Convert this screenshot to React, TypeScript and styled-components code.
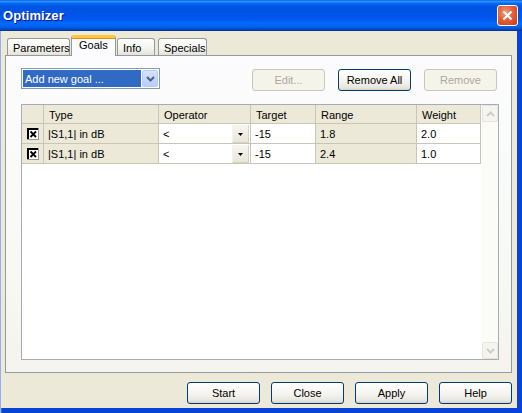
import React from "react";
import styled, { createGlobalStyle, css } from "styled-components";

const GlobalStyle = createGlobalStyle`
  html, body {
    margin: 0;
    padding: 0;
    background: #ffffff;
  }

  body {
    font-family: "Liberation Sans", Arial, sans-serif;
    font-size: 11px;
    color: #000;
  }

  * {
    box-sizing: border-box;
  }
`;

const Window = styled.div`
  width: 522px;
  height: 413px;
  display: flex;
  flex-direction: column;
  overflow: hidden;
  background: linear-gradient(to right, #c7d5f2 0px, #0842d6 2px, #0842d6 100%);
`;

const TitleBar = styled.div`
  height: 31px;
  flex: none;
  display: flex;
  align-items: center;
  justify-content: space-between;
  padding: 0 4px 1px 3px;
  background: linear-gradient(
    to bottom,
    #0058ee 0%,
    #3593ff 4%,
    #288eff 6%,
    #127dff 8%,
    #036ffc 10%,
    #0262ee 14%,
    #0057e5 20%,
    #0054e3 24%,
    #0055eb 56%,
    #005bf5 66%,
    #026afe 76%,
    #0062ef 86%,
    #0052d6 92%,
    #0040ab 97%,
    #003092 100%
  );

  h1 {
    margin: 0;
    color: #ffffff;
    font-family: "Liberation Sans", Arial, sans-serif;
    font-size: 13px;
    font-weight: 700;
    text-shadow: 1px 1px #0a1883;
    letter-spacing: 0.1px;
  }
`;

const CloseButton = styled.div`
  width: 21px;
  height: 21px;
  border: 1px solid #ffffff;
  border-radius: 3px;
  display: flex;
  align-items: center;
  justify-content: center;
  background: radial-gradient(circle at 40% 35%, #f0a080 0%, #e2603a 45%, #c43c17 100%);
`;

const Body = styled.div`
  flex: 1;
  margin: 0 5px 5px 1px;
  background: #ece9d8;
  display: flex;
  flex-direction: column;
`;

const TabStrip = styled.div`
  height: 20px;
  margin-top: 4px;
  padding-left: 6px;
  display: flex;
  align-items: flex-end;
  gap: 1px;
`;

const Tab = styled.div<{ $active?: boolean; $w: number; $gap?: number }>`
  width: ${(p) => p.$w}px;
  margin-left: ${(p) => p.$gap || 0}px;
  height: 17px;
  border: 1px solid #919b9c;
  border-bottom: none;
  border-radius: 3px 3px 0 0;
  background: linear-gradient(#ffffff, #f3f3ef 60%, #e3e2da);
  display: flex;
  align-items: center;
  padding-left: 5px;
  padding-top: 1px;

  ${(p) =>
    p.$active &&
    css`
      position: relative;
      z-index: 1;
      height: 21px;
      margin-bottom: -1px;
      background: #fcfcfe;
      border-top: 3px solid #ffc83c;
      box-shadow: inset 0 1px 0 #e68b2c;
      padding-left: 7px;
      align-items: flex-start;
      padding-top: 1px;
    `}
`;

const Panel = styled.div`
  height: 318px;
  flex: none;
  margin: 0 5px 0 4px;
  border: 1px solid #919b9c;
  background: linear-gradient(#fcfcfe, #f7f7f2 80%, #f4f3ee);
  padding: 12px 12px 0 15px;
  display: flex;
  flex-direction: column;
`;

const Toolbar = styled.div`
  height: 22px;
  display: flex;
  justify-content: space-between;
  align-items: flex-start;
  padding-right: 2px;
`;

const Combo = styled.div`
  width: 139px;
  height: 21px;
  border: 1px solid #7f9db9;
  background: #ffffff;
  display: flex;
  align-items: stretch;
  padding: 1px;
`;

const ComboValue = styled.div`
  flex: 1;
  background: #316ac5;
  color: #ffffff;
  padding-left: 2px;
  display: flex;
  align-items: center;
  margin-right: 1px;
`;

const ComboArrow = styled.div`
  width: 16px;
  border: 1px solid #b9cbf3;
  border-radius: 2px;
  background: linear-gradient(#d6e2fd, #b9cdf9);
  display: flex;
  align-items: center;
  justify-content: center;
`;

const ButtonGroup = styled.div`
  display: flex;
  gap: 13px;
  margin-top: 1px;
`;

const Button = styled.div<{ disabled?: boolean }>`
  width: 73px;
  height: 22px;
  border: 1px solid #003c74;
  border-radius: 3px;
  background: linear-gradient(#ffffff, #f3f2ee 60%, #e6e4dc 90%, #d6d0c5);
  display: flex;
  align-items: center;
  justify-content: center;
  color: #000;

  ${(p) =>
    p.disabled &&
    css`
      border-color: #c9c7ba;
      background: #f5f4ea;
      color: #aca899;
    `}
`;

const Grid = styled.div`
  margin-top: 14px;
  height: 256px;
  border: 1px solid #a5acb5;
  background: #ffffff;
  display: flex;
`;

const Table = styled.div`
  flex: 1;
  display: grid;
  grid-template-columns: 22px 115px 92px 65px 101px 64px;
  grid-auto-rows: 20px;
  grid-template-rows: 19px;
  align-content: start;
`;

const Cell = styled.div<{ $shade?: boolean; $head?: boolean }>`
  border-right: 1px solid #c9c6b8;
  border-bottom: 1px solid #c9c6b8;
  background: ${(p) => (p.$shade || p.$head ? "#ece9d8" : "#ffffff")};
  display: flex;
  align-items: center;
  padding-left: 4px;
  white-space: nowrap;
  ${(p) =>
    p.$head &&
    css`
      padding-left: 5px;
      padding-top: 1px;
    `}
`;

const CheckCell = styled(Cell)`
  padding-left: 5px;
`;

const OpCell = styled(Cell)`
  padding-right: 1px;
  align-items: stretch;

  span {
    display: flex;
    align-items: center;
  }
`;

const DropButton = styled.div`
  margin-left: auto;
  width: 17px;
  margin-top: 1px;
  background: linear-gradient(#f6f5ef, #e9e6d9);
  border: 1px solid #f4f3ec;
  border-right-color: #d6d3c6;
  border-bottom-color: #d6d3c6;
  display: flex;
  align-items: center;
  justify-content: center;
`;

const Scrollbar = styled.div`
  width: 17px;
  border-left: 1px solid #ffffff;
  background: #fbfbf8;
  display: flex;
  flex-direction: column;
  justify-content: space-between;
`;

const ScrollButton = styled.div`
  height: 17px;
  border: 1px solid #e6e5de;
  border-radius: 2px;
  background: #f5f5f0;
  display: flex;
  align-items: center;
  justify-content: center;
`;

const Footer = styled.div`
  display: flex;
  justify-content: flex-end;
  gap: 11px;
  padding: 9px 5px 0 0;
`;

// old flat-style checkbox: heavy top/left edge, light bottom/right
const CheckBox = () => (
  <svg width="12" height="12" viewBox="0 0 12 12">
    <rect x="0" y="0" width="12" height="12" fill="#ffffff" />
    <rect x="0" y="0" width="12" height="2" fill="#000" />
    <rect x="0" y="0" width="2" height="12" fill="#000" />
    <rect x="11" y="0" width="1" height="12" fill="#9a988c" />
    <rect x="0" y="11" width="12" height="1" fill="#9a988c" />
    <path d="M3.5 3.5 L9 9 M9 3.5 L3.5 9" stroke="#000" strokeWidth="1.8" />
  </svg>
);

const Chevron = ({ color, up }: { color: string; up?: boolean }) => (
  <svg width="9" height="6" viewBox="0 0 9 6">
    <path
      d={up ? "M1 5 L4.5 1.5 L8 5" : "M1 1 L4.5 4.5 L8 1"}
      fill="none"
      stroke={color}
      strokeWidth="2"
    />
  </svg>
);

const rows = [
  { type: "|S1,1| in dB", op: "<", target: "-15", range: "1.8", weight: "2.0" },
  { type: "|S1,1| in dB", op: "<", target: "-15", range: "2.4", weight: "1.0" },
];

const App = () => {
  return (
    <Window>
      <GlobalStyle />
      <TitleBar>
        <h1>Optimizer</h1>
        <CloseButton>
          <svg width="11" height="11" viewBox="0 0 11 11">
            <path d="M1.5 1.5 L9.5 9.5 M9.5 1.5 L1.5 9.5" stroke="#fff" strokeWidth="2" />
          </svg>
        </CloseButton>
      </TitleBar>

      <Body>
        <TabStrip>
          <Tab $w={63}>Parameters</Tab>
          <Tab $w={45} $active>
            Goals
          </Tab>
          <Tab $w={38}>Info</Tab>
          <Tab $w={49} $gap={2}>
            Specials
          </Tab>
        </TabStrip>

        <Panel>
          <Toolbar>
            <Combo>
              <ComboValue>Add new goal ...</ComboValue>
              <ComboArrow>
                <Chevron color="#4d6185" />
              </ComboArrow>
            </Combo>
            <ButtonGroup>
              <Button disabled>Edit...</Button>
              <Button>Remove All</Button>
              <Button disabled>Remove</Button>
            </ButtonGroup>
          </Toolbar>

          <Grid>
            <Table>
              <Cell $head />
              <Cell $head>Type</Cell>
              <Cell $head>Operator</Cell>
              <Cell $head>Target</Cell>
              <Cell $head>Range</Cell>
              <Cell $head>Weight</Cell>
              {rows.map((r, i) => (
                <React.Fragment key={i}>
                  <CheckCell $shade>
                    <CheckBox />
                  </CheckCell>
                  <Cell $shade>{r.type}</Cell>
                  <OpCell>
                    <span>{r.op}</span>
                    <DropButton>
                      <svg width="5" height="3" viewBox="0 0 5 3">
                        <path d="M0 0 H5 L2.5 3 Z" fill="#000" />
                      </svg>
                    </DropButton>
                  </OpCell>
                  <Cell>{r.target}</Cell>
                  <Cell $shade>{r.range}</Cell>
                  <Cell>{r.weight}</Cell>
                </React.Fragment>
              ))}
            </Table>
            <Scrollbar>
              <ScrollButton>
                <Chevron color="#cfcdc3" up />
              </ScrollButton>
              <ScrollButton>
                <Chevron color="#cfcdc3" />
              </ScrollButton>
            </Scrollbar>
          </Grid>
        </Panel>

        <Footer>
          <Button>Start</Button>
          <Button>Close</Button>
          <Button>Apply</Button>
          <Button>Help</Button>
        </Footer>
      </Body>
    </Window>
  );
};

export default App;
